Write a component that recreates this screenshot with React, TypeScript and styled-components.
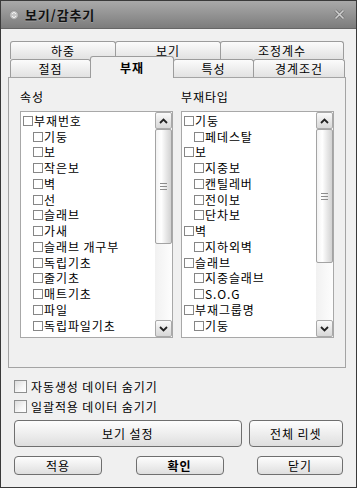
import styled, { createGlobalStyle } from 'styled-components';

const GlobalStyle = createGlobalStyle`
  html, body {
    margin: 0;
    padding: 0;
    background: #f0f0f0;
  }
  body {
    font-family: "Noto Sans CJK KR", "Noto Sans", sans-serif;
    font-size: 12px;
    letter-spacing: 0.9px;
    color: #000;
  }
`;

const Window = styled.div`
  width: 357px;
  height: 488px;
  box-sizing: border-box;
  border: 1px solid #3a3a3a;
  display: flex;
  flex-direction: column;
  background: #f0f0f0;
`;

const TitleBar = styled.div`
  height: 27px;
  display: flex;
  align-items: center;
  padding: 0 11px 0 8px;
  gap: 6px;
  background: linear-gradient(#a9a9a9, #939393 50%, #7c7c7c);
  border-bottom: 1px solid #666;
`;

const Title = styled.span`
  flex: 1;
  font-size: 13px;
  font-weight: bold;
  color: #111;
  text-shadow: 0 1px 0 rgba(255, 255, 255, 0.2);
`;

const Body = styled.div`
  flex: 1;
  display: flex;
  flex-direction: column;
  padding: 12px 10px 0 7px;
`;

const TabArea = styled.div`
  margin-left: 2px;
  display: flex;
  flex-direction: column;
`;

const TabRow = styled.div`
  display: flex;
  height: 18px;
  align-items: flex-end;
`;

const Tab = styled.div<{ $w: number; $active?: boolean }>`
  width: ${p => p.$w}px;
  height: ${p => (p.$active ? 22 : 18)}px;
  margin-bottom: ${p => (p.$active ? -1 : 0)}px;
  box-sizing: border-box;
  border: 1px solid #9c9c9c;
  border-bottom: none;
  border-radius: 3px 3px 0 0;
  background: ${p => (p.$active ? '#f0f0f0' : 'linear-gradient(#fbfbfb, #ececec 60%, #e2e2e2)')};
  font-weight: ${p => (p.$active ? 'bold' : 'normal')};
  display: flex;
  align-items: center;
  justify-content: center;
  line-height: 14px;
  position: relative;
  z-index: ${p => (p.$active ? 2 : 1)};
  & + & {
    margin-left: -1px;
  }
`;

const Panel = styled.div`
  height: 291px;
  box-sizing: border-box;
  border: 1px solid #a4a4a4;
  padding: 12px 11px 0 11px;
  display: flex;
  gap: 8px;
`;

const Column = styled.div`
  flex: 1;
  display: flex;
  flex-direction: column;
`;

const Label = styled.div`
  line-height: 14px;
  height: 14px;
  margin-bottom: 7px;
`;

const ListBox = styled.div`
  height: 227px;
  box-sizing: border-box;
  border: 1px solid #a8a8a8;
  background: #fff;
  display: flex;
`;

const Items = styled.div`
  flex: 1;
  padding-top: 1px;
  overflow: hidden;
`;

const Item = styled.div<{ $child?: boolean }>`
  height: 15.75px;
  display: flex;
  align-items: center;
  padding-left: ${p => (p.$child ? 12 : 2)}px;
  white-space: nowrap;
  line-height: 14px;
`;

const Check = styled.span`
  width: 10px;
  height: 10px;
  box-sizing: border-box;
  border: 1px solid #868686;
  background: #fff;
  margin-right: 1px;
  flex: none;
`;

const Scrollbar = styled.div`
  width: 17px;
  display: flex;
  flex-direction: column;
  background: linear-gradient(90deg, #f1f1f1, #fdfdfd);
`;

const ScrollButton = styled.div`
  height: 17px;
  box-sizing: border-box;
  border: 1px solid #a9a9a9;
  border-radius: 2px;
  background: linear-gradient(#fafafa, #e6e6e6 55%, #d8d8d8);
  display: flex;
  align-items: center;
  justify-content: center;
`;

const Thumb = styled.div<{ $h: number }>`
  height: ${p => p.$h}px;
  box-sizing: border-box;
  border: 1px solid #a3a3a3;
  border-radius: 2px;
  background: linear-gradient(90deg, #f2f2f2, #ffffff 35%, #e6e6e6 70%, #d2d2d2);
  display: flex;
  align-items: center;
  justify-content: center;
`;

const Track = styled.div`
  flex: 1;
`;

const Grip = styled.div`
  width: 7px;
  height: 5px;
  border-top: 1px solid #8c8c8c;
  border-bottom: 1px solid #8c8c8c;
  position: relative;
  &::after {
    content: '';
    position: absolute;
    left: 0;
    right: 0;
    top: 2px;
    border-top: 1px solid #8c8c8c;
  }
`;

const Options = styled.div`
  margin: 12px 3px 0 6px;
  display: flex;
  flex-direction: column;
  gap: 7px;
`;

const OptionRow = styled.label`
  display: flex;
  align-items: center;
  height: 13px;
  gap: 4px;
  line-height: 14px;
`;

const OptionBox = styled.span`
  width: 13px;
  height: 13px;
  box-sizing: border-box;
  border: 1px solid #8e8f8f;
  background: linear-gradient(135deg, #dcdcdc, #f6f6f6 60%, #ffffff);
`;

const ButtonRow = styled.div<{ $top: number; $spread?: boolean }>`
  display: flex;
  margin: ${p => p.$top}px 3px 0 6px;
  gap: 7px;
  justify-content: ${p => (p.$spread ? 'space-between' : 'flex-start')};
`;

const Button = styled.button<{ $w: number; $h: number; $bold?: boolean }>`
  width: ${p => p.$w}px;
  height: ${p => p.$h}px;
  box-sizing: border-box;
  border: 1px solid #6f6f6f;
  border-radius: 4px;
  background: linear-gradient(#fdfdfd, #eeeeee 50%, #dedede);
  font-family: inherit;
  font-size: 12px;
  letter-spacing: inherit;
  font-weight: ${p => (p.$bold ? 'bold' : 'normal')};
  color: #000;
  padding: 0;
  line-height: 14px;
`;

const leftItems: [string, boolean][] = [
  ['부재번호', false],
  ['기둥', true],
  ['보', true],
  ['작은보', true],
  ['벽', true],
  ['선', true],
  ['슬래브', true],
  ['가새', true],
  ['슬래브 개구부', true],
  ['독립기초', true],
  ['줄기초', true],
  ['매트기초', true],
  ['파일', true],
  ['독립파일기초', true],
];

const rightItems: [string, boolean][] = [
  ['기둥', false],
  ['페데스탈', true],
  ['보', false],
  ['지중보', true],
  ['캔틸레버', true],
  ['전이보', true],
  ['단차보', true],
  ['벽', false],
  ['지하외벽', true],
  ['슬래브', false],
  ['지중슬래브', true],
  ['S.O.G', true],
  ['부재그룹명', false],
  ['기둥', true],
];

const Chevron = ({ up }: { up?: boolean }) => (
  <svg width="9" height="6" viewBox="0 0 9 6">
    <path
      d={up ? 'M1 5 L4.5 1.5 L8 5' : 'M1 1 L4.5 4.5 L8 1'}
      fill="none"
      stroke="#222"
      strokeWidth="1.8"
    />
  </svg>
);

const List = ({ items, thumb }: { items: [string, boolean][]; thumb: number }) => (
  <ListBox>
    <Items>
      {items.map(([text, child], i) => (
        <Item key={i} $child={child}>
          <Check />
          {text}
        </Item>
      ))}
    </Items>
    <Scrollbar>
      <ScrollButton><Chevron up /></ScrollButton>
      <Thumb $h={thumb}><Grip /></Thumb>
      <Track />
      <ScrollButton><Chevron /></ScrollButton>
    </Scrollbar>
  </ListBox>
);

export default function App() {
  return (
    <>
      <GlobalStyle />
      <Window>
        <TitleBar>
          <svg width="10" height="10" viewBox="0 0 10 10">
            <circle cx="5" cy="5" r="4.3" fill="#c4c4c4" stroke="#8a8a8a" strokeWidth="0.8" />
            <path d="M3 4 L5 2.2 L7 4 M3 6 L5 7.8 L7 6" fill="none" stroke="#f4f4f4" strokeWidth="1" />
          </svg>
          <Title>보기/감추기</Title>
          <svg width="11" height="11" viewBox="0 0 11 11">
            <path d="M1.5 1.5 L9.5 9.5 M9.5 1.5 L1.5 9.5" stroke="#6e6e6e" strokeWidth="3" />
            <path d="M1.5 1.5 L9.5 9.5 M9.5 1.5 L1.5 9.5" stroke="#cfcfcf" strokeWidth="1.6" />
          </svg>
        </TitleBar>
        <Body>
          <TabArea>
            <TabRow>
              <Tab $w={106}>하중</Tab>
              <Tab $w={106}>보기</Tab>
              <Tab $w={124}>조정계수</Tab>
            </TabRow>
            <TabRow>
              <Tab $w={81}>절점</Tab>
              <Tab $w={84} $active>부재</Tab>
              <Tab $w={81}>특성</Tab>
              <Tab $w={92}>경계조건</Tab>
            </TabRow>
          </TabArea>
          <Panel>
            <Column>
              <Label>속성</Label>
              <List items={leftItems} thumb={115} />
            </Column>
            <Column>
              <Label>부재타입</Label>
              <List items={rightItems} thumb={134} />
            </Column>
          </Panel>
          <Options>
            <OptionRow><OptionBox />자동생성 데이터 숨기기</OptionRow>
            <OptionRow><OptionBox />일괄적용 데이터 숨기기</OptionRow>
          </Options>
          <ButtonRow $top={7}>
            <Button $w={229} $h={27}>보기 설정</Button>
            <Button $w={95} $h={27}>전체 리셋</Button>
          </ButtonRow>
          <ButtonRow $top={9} $spread>
            <Button $w={88} $h={19}>적용</Button>
            <Button $w={88} $h={19} $bold>확인</Button>
            <Button $w={86} $h={19}>닫기</Button>
          </ButtonRow>
        </Body>
      </Window>
    </>
  );
}
